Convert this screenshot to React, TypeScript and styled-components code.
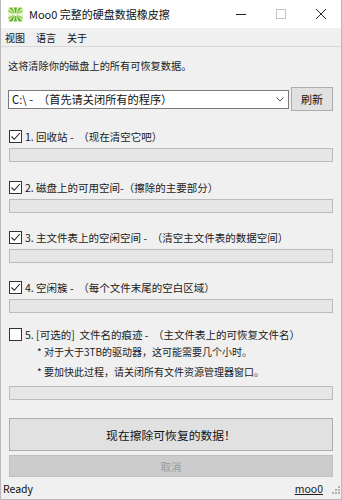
import styled, { createGlobalStyle } from 'styled-components';

const GlobalStyle = createGlobalStyle`
	html, body {
		margin: 0;
		padding: 0;
		background: #f0f0f0;
	}
	* {
		box-sizing: border-box;
	}
`;

const FONT = `'Noto Sans CJK SC', 'Liberation Sans', sans-serif`;

const Window = styled.div`
	width: 342px;
	height: 500px;
	display: flex;
	flex-direction: column;
	background: #f0f0f0;
	border-left: 1px solid #b9b9b9;
	border-right: 1px solid #b9b9b9;
	border-bottom: 1px solid #b9b9b9;
	font-family: ${FONT};
	font-size: 10.2px;
	color: #1a1a1a;
	overflow: hidden;
`;

const TitleBar = styled.div`
	height: 28px;
	display: flex;
	align-items: center;
	background: #ffffff;
	padding-left: 7px;
`;

const TitleText = styled.div`
	flex: 1;
	margin-left: 6px;
	font-size: 11px;
	color: #111;
	white-space: nowrap;
`;

const WinButton = styled.div`
	width: 40px;
	height: 28px;
	display: flex;
	align-items: center;
	justify-content: center;
`;

const MenuBar = styled.div`
	height: 19px;
	display: flex;
	align-items: center;
	gap: 11px;
	padding-left: 4px;
	background: #f0f0f0;
	border-bottom: 1px solid #d8d8d8;
`;

const MenuItem = styled.span`
	font-size: 10px;
	color: #111;
`;

const Main = styled.div`
	flex: 1;
	display: flex;
	flex-direction: column;
	padding: 11px 8px 0 8px;
`;

const Intro = styled.div`
	line-height: 16px;
	color: #222;
	margin-left: -1px;
`;

const DriveRow = styled.div`
	display: flex;
	align-items: center;
	margin-top: 13px;
	height: 24px;
	margin-left: -1px;
`;

const Combo = styled.div`
	flex: 1;
	height: 19px;
	display: flex;
	align-items: center;
	background: #fff;
	border: 1px solid #7a7a7a;
	padding-left: 3px;
	padding-right: 4px;
	font-size: 11.2px;
	color: #111;
`;

const ComboText = styled.span`
	flex: 1;
	white-space: pre;
`;

const RefreshButton = styled.div`
	width: 42px;
	height: 24px;
	margin-left: 2px;
	display: flex;
	align-items: center;
	justify-content: center;
	background: #e1e1e1;
	border: 1px solid #adadad;
	font-size: 11px;
	color: #111;
`;

const Section = styled.div<{ $top: number }>`
	margin-top: ${(p) => p.$top}px;
	display: flex;
	flex-direction: column;
`;

const CheckRow = styled.div`
	display: flex;
	align-items: center;
	height: 16px;
	font-size: 10.5px;
	white-space: pre;
	color: #1a1a1a;
`;

const Box = styled.div`
	flex-shrink: 0;
	width: 13px;
	height: 13px;
	border: 1px solid #333;
	background: #fff;
	margin-right: 3px;
	display: flex;
	align-items: center;
	justify-content: center;
`;

const Note = styled.div`
	padding-left: 28px;
	line-height: 20px;
	font-size: 10px;
	color: #222;
	white-space: pre;
`;

const Bar = styled.div<{ $top: number }>`
	margin-top: ${(p) => p.$top}px;
	height: 14px;
	background: #e6e6e6;
	border: 1px solid #bcbcbc;
`;

const BigButton = styled.div`
	margin-top: 18px;
	height: 33px;
	display: flex;
	align-items: center;
	justify-content: center;
	background: #e1e1e1;
	border: 1px solid #adadad;
	font-size: 11.8px;
	color: #111;
`;

const CancelButton = styled.div`
	margin-top: 4px;
	height: 22px;
	display: flex;
	align-items: center;
	justify-content: center;
	background: #cccccc;
	border: 1px solid #bfbfbf;
	font-size: 10.5px;
	color: #9a9a9a;
`;

const StatusBar = styled.div`
	position: relative;
	height: 22px;
	display: flex;
	align-items: center;
	justify-content: space-between;
	padding: 0 4px 0 2px;
	font-family: ${FONT};
	font-size: 10.5px;
	color: #111;
`;

const Link = styled.span`
	text-decoration: underline;
	margin-right: 14px;
	color: #222;
`;

const Grip = styled.div`
	position: absolute;
	right: 1px;
	bottom: 2px;
`;

const Logo = () => (
	<svg width="15" height="15" viewBox="0 0 15 15">
		<rect x="0" y="0" width="15" height="15" fill="#e9f5d8" />
		<path d="M7.5 7.5 L1 1 L4 0.5 Z" fill="#6cbf2a" />
		<path d="M7.5 7.5 L0.5 5 L0.5 2.5 Z" fill="#8ccf3a" />
		<path d="M7.5 7.5 L14 1 L11 0.5 Z" fill="#6cbf2a" />
		<path d="M7.5 7.5 L14.5 5 L14.5 2.5 Z" fill="#8ccf3a" />
		<path d="M7.5 7.5 L1 14 L4 14.5 Z" fill="#4ea81e" />
		<path d="M7.5 7.5 L0.5 10 L0.5 12.5 Z" fill="#8ccf3a" />
		<path d="M7.5 7.5 L14 14 L11 14.5 Z" fill="#4ea81e" />
		<path d="M7.5 7.5 L14.5 10 L14.5 12.5 Z" fill="#8ccf3a" />
		<path d="M7.5 7.5 L6 0.5 L9 0.5 Z" fill="#5bb524" />
		<path d="M7.5 7.5 L6 14.5 L9 14.5 Z" fill="#5bb524" />
		<circle cx="7.5" cy="7.5" r="1.6" fill="#f4faea" />
	</svg>
);

const Check = () => (
	<svg width="11" height="11" viewBox="0 0 11 11">
		<path d="M1.5 5.5 L4.3 8.3 L9.8 2" stroke="#222" strokeWidth="1.1" fill="none" />
	</svg>
);

const Checkbox = ({ checked }: { checked: boolean }) => <Box>{checked && <Check />}</Box>;

const options = [
	{ top: 17, label: '1. 回收站 -  （现在清空它吧）' },
	{ top: 17, label: '2. 磁盘上的可用空间-（擦除的主要部分）' },
	{ top: 16, label: '3. 主文件表上的空闲空间 -  （清空主文件表的数据空间）' },
	{ top: 16, label: '4. 空闲簇 -  （每个文件末尾的空白区域）' },
];

const App = () => {
	return (
		<>
			<GlobalStyle />
			<Window>
				<TitleBar>
					<Logo />
					<TitleText>Moo0 完整的硬盘数据橡皮擦</TitleText>
					<WinButton>
						<svg width="10" height="10" viewBox="0 0 10 10">
							<path d="M0 5.5 H10" stroke="#222" strokeWidth="1" />
						</svg>
					</WinButton>
					<WinButton>
						<svg width="10" height="10" viewBox="0 0 10 10">
							<rect x="0.5" y="0.5" width="9" height="9" stroke="#c4c4c4" fill="none" />
						</svg>
					</WinButton>
					<WinButton>
						<svg width="10" height="10" viewBox="0 0 10 10">
							<path d="M0 0 L10 10 M10 0 L0 10" stroke="#222" strokeWidth="1" />
						</svg>
					</WinButton>
				</TitleBar>
				<MenuBar>
					<MenuItem>视图</MenuItem>
					<MenuItem>语言</MenuItem>
					<MenuItem>关于</MenuItem>
				</MenuBar>
				<Main>
					<Intro>这将清除你的磁盘上的所有可恢复数据。</Intro>
					<DriveRow>
						<Combo>
							<ComboText>C:\ -  （首先请关闭所有的程序）</ComboText>
							<svg width="8" height="5" viewBox="0 0 8 5">
								<path d="M0.5 0.5 L4 4 L7.5 0.5" stroke="#555" fill="none" />
							</svg>
						</Combo>
						<RefreshButton>刷新</RefreshButton>
					</DriveRow>
					{options.map((o) => (
						<Section key={o.label} $top={o.top}>
							<CheckRow>
								<Checkbox checked />
								{o.label}
							</CheckRow>
							<Bar $top={4} />
						</Section>
					))}
					<Section $top={13}>
						<CheckRow>
							<Checkbox checked={false} />
							5. [可选的]  文件名的痕迹 -  （主文件表上的可恢复文件名）
						</CheckRow>
						<Note>* 对于大于3TB的驱动器，这可能需要几个小时。</Note>
						<Note>* 要加快此过程，请关闭所有文件资源管理器窗口。</Note>
						<Bar $top={4} />
					</Section>
					<BigButton>现在擦除可恢复的数据！</BigButton>
					<CancelButton>取消</CancelButton>
				</Main>
				<StatusBar>
					<span>Ready</span>
					<Link>moo0</Link>
					<Grip>
						<svg width="10" height="10" viewBox="0 0 10 10" fill="#b0b0b0">
							<rect x="8" y="2" width="2" height="2" />
							<rect x="5" y="5" width="2" height="2" />
							<rect x="8" y="5" width="2" height="2" />
							<rect x="2" y="8" width="2" height="2" />
							<rect x="5" y="8" width="2" height="2" />
							<rect x="8" y="8" width="2" height="2" />
						</svg>
					</Grip>
				</StatusBar>
			</Window>
		</>
	);
};

export default App;
